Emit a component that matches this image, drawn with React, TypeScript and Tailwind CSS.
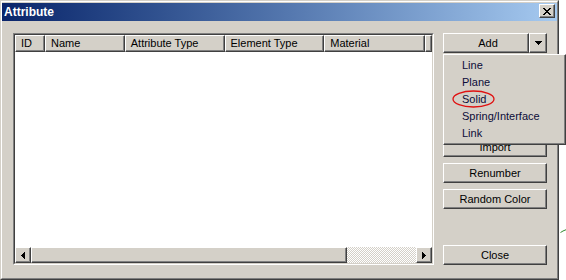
import React from 'react';

const raised =
    'border border-t-white border-l-white border-r-[#404040] border-b-[#404040] shadow-[inset_-1px_-1px_0_#808080]';

const columns = [
    { label: 'ID', w: 'w-[30px]' },
    { label: 'Name', w: 'w-[80px]' },
    { label: 'Attribute Type', w: 'w-[100px]' },
    { label: 'Element Type', w: 'w-[100px]' },
    { label: 'Material', w: 'w-[101px]' },
    { label: 'Property', w: 'flex-1 min-w-0' },
];

const menuItems = ['Line', 'Plane', 'Solid', 'Spring/Interface', 'Link'];

const Btn: React.FC<{ label?: string }> = ({ label }) => (
    <button type="button" className={`h-[20px] w-full shrink-0 flex items-center justify-center bg-[#d4d0c8] text-black ${raised}`}>
        {label}
    </button>
);

const Arrow: React.FC<{ dir: 'left' | 'right' }> = ({ dir }) => (
    <svg width="4" height="7" viewBox="0 0 4 7" shapeRendering="crispEdges">
        {dir === 'left' ? <polygon points="4,0 4,7 0,3.5" fill="#000" /> : <polygon points="0,0 0,7 4,3.5" fill="#000" />}
    </svg>
);

export default function App() {
    return (
        <div className="relative w-[566px] h-[280px] flex bg-white overflow-hidden font-['Liberation_Sans',Arial,sans-serif] text-[11px] leading-none">
            {/* Window */}
            <div className="w-[559px] h-[280px] shrink-0 border border-t-[#d4d0c8] border-l-[#d4d0c8] border-r-[#404040] border-b-[#404040]">
                <div className="h-full flex flex-col bg-[#d4d0c8] border border-t-white border-l-white border-r-[#808080] border-b-[#808080] pt-[1px]">
                    {/* Title bar */}
                    <div className="h-[18px] flex items-start bg-gradient-to-r from-[#0a246a] to-[#a6caf0]">
                        <span className="pl-[2px] self-center text-white font-bold text-[12px]">Attribute</span>
                        <div className={`ml-auto mr-[2px] mt-[1px] w-[16px] h-[14px] flex items-center justify-center bg-[#d4d0c8] ${raised}`}>
                            <svg width="8" height="7" viewBox="0 0 8 7" shapeRendering="crispEdges">
                                <path
                                    fill="#000"
                                    d="M0 0h2v1H0zM6 0h2v1H6zM1 1h2v1H1zM5 1h2v1H5zM2 2h4v1H2zM3 3h2v1H3zM2 4h4v1H2zM1 5h2v1H1zM5 5h2v1H5zM0 6h2v1H0zM6 6h2v1H6z"
                                />
                            </svg>
                        </div>
                    </div>

                    {/* Body */}
                    <div className="flex pl-[11px] pt-[12px] pr-[10px] gap-[9px]">
                        {/* List view */}
                        <div className="w-[421px] h-[232px] border border-t-[#808080] border-l-[#808080] border-r-white border-b-white">
                            <div className="h-full flex flex-col border border-t-[#404040] border-l-[#404040] border-r-[#d4d0c8] border-b-[#d4d0c8] bg-white">
                                <div className="h-[17px] flex bg-[#d4d0c8] shrink-0">
                                    {columns.map((c) => (
                                        <div
                                            key={c.label}
                                            className={`${c.w} h-full flex items-center pl-[5px] overflow-hidden whitespace-nowrap text-black ${raised}`}
                                        >
                                            {c.label}
                                        </div>
                                    ))}
                                </div>
                                <div className="flex-1 bg-white" />
                                <div className="h-[16px] flex shrink-0">
                                    <div className={`w-[16px] h-full flex items-center justify-center bg-[#d4d0c8] ${raised}`}>
                                        <Arrow dir="left" />
                                    </div>
                                    <div className={`w-[316px] h-full bg-[#d4d0c8] ${raised}`} />
                                    <div className="flex-1 h-full bg-[image:repeating-conic-gradient(#d4d0c8_0%_25%,#ffffff_0%_50%)] bg-[length:2px_2px]" />
                                    <div className={`w-[16px] h-full flex items-center justify-center bg-[#d4d0c8] ${raised}`}>
                                        <Arrow dir="right" />
                                    </div>
                                </div>
                            </div>
                        </div>

                        {/* Buttons */}
                        <div className="w-[104px] h-[232px] flex flex-col gap-[6px]">
                            <div className="h-[20px] flex shrink-0">
                                <button type="button" className={`flex-1 h-full flex items-center justify-center pl-[4px] bg-[#d4d0c8] text-black ${raised}`}>
                                    Add
                                </button>
                                <div className={`w-[18px] h-full flex items-center justify-center bg-[#d4d0c8] ${raised}`}>
                                    <svg width="7" height="4" viewBox="0 0 7 4" shapeRendering="crispEdges">
                                        <path fill="#000" d="M0 0h7v1H0zM1 1h5v1H1zM2 2h3v1H2zM3 3h1v1H3z" />
                                    </svg>
                                </div>
                            </div>
                            {/* buttons hidden under the open menu */}
                            <Btn />
                            <Btn />
                            <Btn />
                            <Btn label="Import" />
                            <Btn label="Renumber" />
                            <Btn label="Random Color" />
                            <div className="mt-auto">
                                <Btn label="Close" />
                            </div>
                        </div>
                    </div>
                </div>
            </div>

            {/* Desktop strip */}
            <div className="relative flex-1">
                <svg className="absolute left-[1px] top-[228px]" width="7" height="5" viewBox="0 0 7 5">
                    <path d="M0.5 4.5 L3 3 L6.5 1.5" stroke="#2f8a2f" strokeWidth="1" fill="none" />
                </svg>
            </div>

            {/* Add dropdown menu */}
            <div className={`absolute left-[443px] top-[54px] w-[123px] h-[91px] bg-[#d4d0c8] pt-[2px] ${raised}`}>
                {menuItems.map((m) => (
                    <div key={m} className="h-[17px] flex items-center pl-[18px] text-[#0c0c38] whitespace-nowrap">
                        {m}
                    </div>
                ))}
            </div>

            {/* Annotation */}
            <svg className="absolute left-[452px] top-[90px]" width="44" height="18" viewBox="0 0 44 18">
                <ellipse cx="21.5" cy="9" rx="20.5" ry="8" stroke="#e01010" strokeWidth="1.3" fill="none" />
            </svg>
        </div>
    );
}
